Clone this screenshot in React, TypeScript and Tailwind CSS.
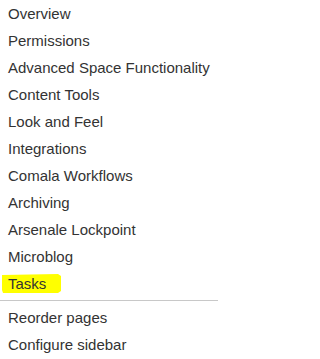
const items = [
    'Overview',
    'Permissions',
    'Advanced Space Functionality',
    'Content Tools',
    'Look and Feel',
    'Integrations',
    'Comala Workflows',
    'Archiving',
    'Arsenale Lockpoint',
    'Microblog',
];

const footer = ['Reorder pages', 'Configure sidebar'];

export default function App() {
    return (
        <div className="w-[220px] h-[359px] bg-white text-[15px] text-[#333] font-['Liberation_Sans',Arial,sans-serif] overflow-hidden">
            <ul>
                {items.map((label) => (
                    <li key={label} className="h-[27px] leading-[27px] pl-[8px] whitespace-nowrap">
                        {label}
                    </li>
                ))}
                <li className="relative h-[27px] leading-[27px] pl-[8px]">
                    <svg className="absolute left-0 top-0" width="70" height="27" viewBox="0 0 70 27">
                        <path d="M2 5 L58 4 L61 6 L61 21 L58 23 L3 23 L2 20 Z" fill="#ffff00" />
                    </svg>
                    <span className="relative">Tasks</span>
                </li>
            </ul>
            <div className="mt-[3px] h-px w-[218px] bg-[#c8c8c8]" />
            <ul className="mt-[3px]">
                {footer.map((label) => (
                    <li key={label} className="h-[27px] leading-[27px] pl-[8px] whitespace-nowrap">
                        {label}
                    </li>
                ))}
            </ul>
        </div>
    );
}
